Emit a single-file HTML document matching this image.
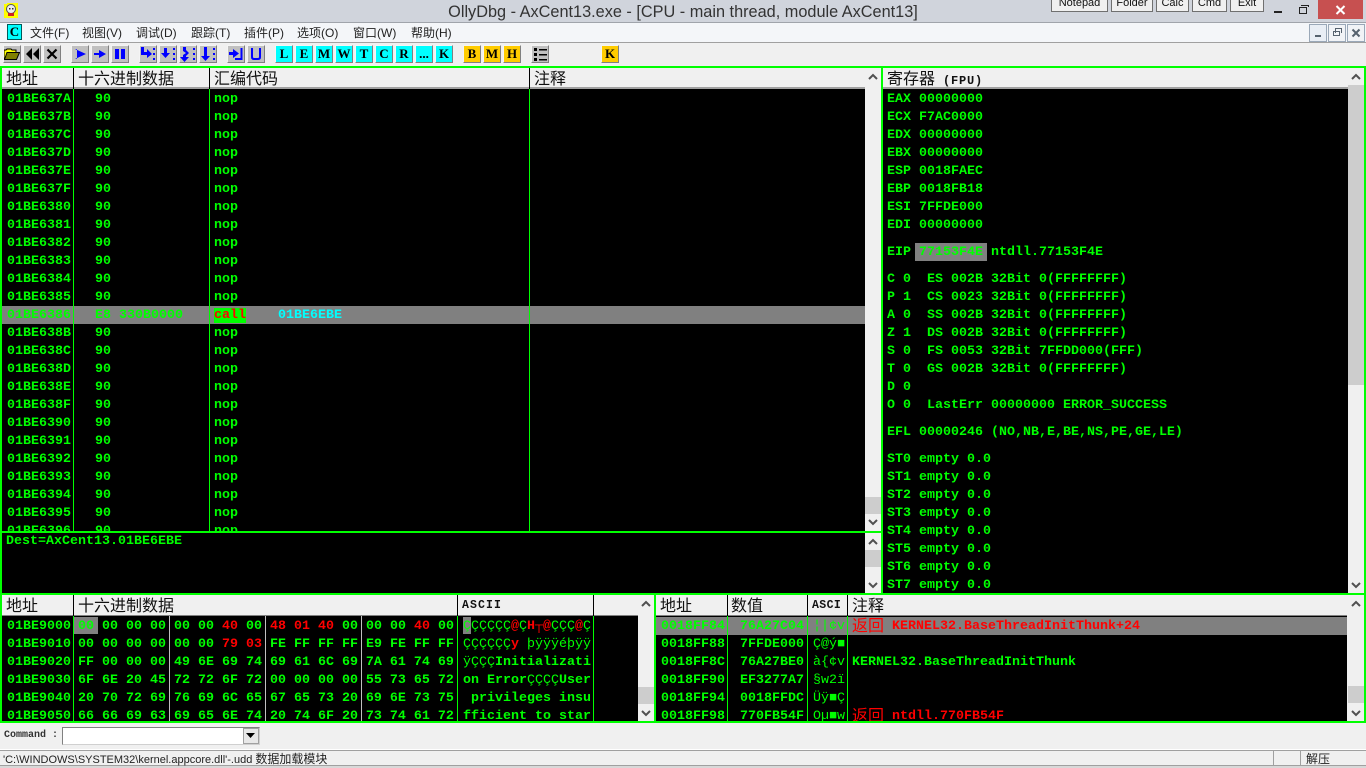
<!DOCTYPE html>
<html><head><meta charset="utf-8"><title>OllyDbg</title>
<style>
*{box-sizing:border-box}
html,body{margin:0;padding:0;width:1366px;height:768px;overflow:hidden;background:#f0f0f0}
div,pre,span.a{position:absolute}
pre{margin:0;font:bold 13.33px/18px "Liberation Mono",monospace;color:#0f0;white-space:pre}
.g{background:#0f0}
.k{background:#000}
.h{background:#f0f0f0;height:21px;overflow:hidden}
.ht{font:16px/23px "Liberation Sans","WenQuanYi Zen Hei",sans-serif;color:#111;white-space:pre}
.hb{font:bold 11.5px/21px "Liberation Mono",monospace;color:#111;white-space:pre;letter-spacing:1.1px}
.m{top:24px;font:12px/18px "Liberation Sans","Noto Sans CJK SC",sans-serif;color:#222;white-space:pre}
.b{top:45px;width:18px;height:18px;background:#c0c0c0;border:1px solid;border-color:#f4f4f4 #808080 #808080 #f4f4f4;overflow:hidden}
.b svg{position:absolute;left:0;top:0}
.c{background:#0ff;font:bold 13px/16px "Liberation Serif",serif;color:#000;text-align:center}
.y{background:#fc0;font:bold 13px/16px "Liberation Serif",serif;color:#000;text-align:center}
.tb{top:-6px;height:18px;background:#f0f0f0;border:1px solid #707070;font:11px/16px "Liberation Sans",sans-serif;color:#111;text-align:center}
.sb{background:#f0f0f0}
.th{background:#cdcdcd}
.w{background:#fff}
.mb{top:24px;width:18px;height:18px;background:#e9eef5;border:1px solid #9aa8b8}
svg{display:block}
.r{color:#f00}
.t{font-weight:normal}
.cj{font:16px/18px "Liberation Sans","WenQuanYi Zen Hei",sans-serif;color:#f00}
</style></head><body>

<!-- title bar -->
<div style="left:0;top:0;width:1366px;height:23px;background:#d0d4dc;border-bottom:1px solid #a0a4ab"></div>
<div style="left:7px;top:3px;width:11px;height:15px;background:#ff0"></div>
<svg style="position:absolute;left:3px;top:3px" width="16" height="16"><rect x="1" y="1" width="14" height="14" fill="#ff0"/><circle cx="8" cy="6" r="4.5" fill="#eee" stroke="#555"/><rect x="5" y="10" width="6" height="3" fill="#c22"/><rect x="6" y="5" width="1.5" height="1.5" fill="#333"/><rect x="9" y="5" width="1.5" height="1.5" fill="#333"/></svg>
<div style="left:433px;top:2px;width:500px;font:16.3px/20px 'Liberation Sans',sans-serif;color:#333;white-space:pre;text-align:center">OllyDbg - AxCent13.exe - [CPU - main thread, module AxCent13]</div>
<div class="tb" style="left:1051px;width:57px">Notepad</div>
<div class="tb" style="left:1111px;width:42px">Folder</div>
<div class="tb" style="left:1156px;width:33px">Calc</div>
<div class="tb" style="left:1192px;width:35px">Cmd</div>
<div class="tb" style="left:1230px;width:34px">Exit</div>
<div style="left:1274px;top:11px;width:8px;height:2px;background:#222"></div>
<div style="left:1299px;top:7px;width:8px;height:7px;border:1px solid #222"></div>
<div style="left:1301px;top:5px;width:8px;height:2px;border-top:1px solid #222;border-right:1px solid #222"></div>
<div style="left:1318px;top:0;width:45px;height:19px;background:#c75050"></div>
<svg style="position:absolute;left:1335px;top:5px" width="11" height="10"><path d="M1.5 1L9.5 9M9.5 1L1.5 9" stroke="#fff" stroke-width="2"/></svg>

<!-- menu -->
<div style="left:0;top:23px;width:1366px;height:20px;background:#f4f6f9;border-bottom:1px solid #a0a0a0"></div>
<div class="c" style="left:7px;top:24px;width:15px;height:16px;border:1px solid #005a5a;font-size:13px;line-height:14px">C</div>
<div class="m" style="left:30px">文件(F)</div>
<div class="m" style="left:82px">视图(V)</div>
<div class="m" style="left:136px">调试(D)</div>
<div class="m" style="left:191px">跟踪(T)</div>
<div class="m" style="left:244px">插件(P)</div>
<div class="m" style="left:297px">选项(O)</div>
<div class="m" style="left:353px">窗口(W)</div>
<div class="m" style="left:411px">帮助(H)</div>
<div class="mb" style="left:1309px"><div style="left:5px;top:10px;width:6px;height:2px;background:#56626e"></div></div>
<div class="mb" style="left:1328px;background:#f1f3f6"><div style="left:4px;top:6px;width:7px;height:5px;border:1px solid #56626e"></div><div style="left:6px;top:3px;width:7px;height:5px;border:1px solid #56626e;border-bottom:0;border-left-width:1px"></div></div>
<div class="mb" style="left:1347px;background:#f1f3f6"><svg style="position:absolute;left:3px;top:3px" width="10" height="10"><path d="M1.5 1.5L8.5 8.5M8.5 1.5L1.5 8.5" stroke="#56626e" stroke-width="2"/></svg></div>

<!-- toolbar -->
<div class="b" style="left:3px"><svg width="16" height="16"><path d="M0 13V4H2L3 3H7L8 4H12V6" fill="#ff0" stroke="#000"/><path d="M0.5 13.5L3 6.5H15.5L12.5 13.5Z" fill="#808000" stroke="#000"/></svg></div>
<div class="b" style="left:23px"><svg width="16" height="16"><path d="M8 2V14L2 8ZM15 2V14L9 8Z" fill="#000"/></svg></div>
<div class="b" style="left:43px"><svg width="16" height="16"><path d="M3.5 3.5L12.5 12.5M12.5 3.5L3.5 12.5" stroke="#000" stroke-width="2.2"/></svg></div>
<div class="b" style="left:71px"><svg width="16" height="16"><path d="M3 3V13L14 8Z M3 3H5V13H3Z" fill="#00f"/></svg></div>
<div class="b" style="left:91px"><svg width="16" height="16"><path d="M2 7H7V4L14 8L7 12V9H2Z" fill="#00f"/></svg></div>
<div class="b" style="left:111px"><svg width="16" height="16"><path d="M3 3H7V13H3ZM9 3H13V13H9Z" fill="#00f"/></svg></div>
<div class="b" style="left:139px"><svg width="16" height="16"><path d="M1 1H4V6H7V3L12 8L7 12V9H1Z" fill="#00f"/><path d="M13 2H15V4H13ZM13 7H15V9H13ZM13 12H15V14H13Z" fill="#00f"/></svg></div>
<div class="b" style="left:159px"><svg width="16" height="16"><path d="M4 2H7V7H10L5.5 12L1 7H4Z" fill="#00f"/><path d="M13 2H15V4H13ZM13 7H15V9H13ZM13 12H15V14H13Z" fill="#00f"/></svg></div>
<div class="b" style="left:179px"><svg width="16" height="16"><path d="M2 1H6V4L9 7L6 10V11H9L4.5 16L0 11H3V9L6 7L3 5V1Z" fill="#00f"/><path d="M13 2H15V4H13ZM13 7H15V9H13ZM13 12H15V14H13Z" fill="#00f"/></svg></div>
<div class="b" style="left:199px"><svg width="16" height="16"><path d="M4 1H7V10H10L5.5 15L1 10H4Z" fill="#00f"/><path d="M13 2H15V4H13ZM13 7H15V9H13ZM13 12H15V14H13Z" fill="#00f"/></svg></div>
<div class="b" style="left:227px"><svg width="16" height="16"><path d="M1 6H5V3L11 7.500L5 12V9H1Z" fill="#00f"/><path d="M13.500 2V13H7" fill="none" stroke="#00f" stroke-width="2"/></svg></div>
<div class="b" style="left:247px"><svg width="16" height="16"><path d="M4 2V11Q4 13 6 13H10Q12 13 12 11V2" fill="none" stroke="#00f" stroke-width="2"/></svg></div>
<div class="b c" style="left:275px">L</div>
<div class="b c" style="left:295px">E</div>
<div class="b c" style="left:315px">M</div>
<div class="b c" style="left:335px">W</div>
<div class="b c" style="left:355px">T</div>
<div class="b c" style="left:375px">C</div>
<div class="b c" style="left:395px">R</div>
<div class="b c" style="left:415px">...</div>
<div class="b c" style="left:435px">K</div>
<div class="b y" style="left:463px">B</div>
<div class="b y" style="left:483px">M</div>
<div class="b y" style="left:503px">H</div>
<div class="b" style="left:531px"><svg width="16" height="16"><path d="M2 2H5V5H2ZM2 7H5V10H2ZM2 12H5V15H2Z" fill="#000"/><path d="M7 3H15V4.500H7ZM7 8H15V9.500H7ZM7 13H15V14.500H7Z" fill="#000"/></svg></div>
<div class="b y" style="left:601px">K</div>

<!-- green frame base -->
<div class="g" style="left:0;top:66px;width:1366px;height:657px"></div>

<!-- CPU pane -->
<div class="h" style="left:2px;top:68px;width:863px;border-bottom:2px solid #a0a0a0"></div>
<div class="ht" style="left:6px;top:68px">地址</div>
<div class="ht" style="left:78px;top:68px">十六进制数据</div>
<div class="ht" style="left:214px;top:68px">汇编代码</div>
<div class="ht" style="left:534px;top:68px">注释</div>
<div class="k" style="left:73px;top:68px;width:1px;height:21px"></div>
<div class="k" style="left:209px;top:68px;width:1px;height:21px"></div>
<div class="k" style="left:529px;top:68px;width:1px;height:21px"></div>
<div class="k" style="left:2px;top:89px;width:863px;height:442px;overflow:hidden">
<div style="left:0;top:217px;width:863px;height:18px;background:#808080"></div>
<div class="g" style="left:71px;top:0;width:1px;height:442px"></div>
<div class="g" style="left:207px;top:0;width:1px;height:442px"></div>
<div class="g" style="left:527px;top:0;width:1px;height:442px"></div>
<pre style="left:5px;top:2px">01BE637A
01BE637B
01BE637C
01BE637D
01BE637E
01BE637F
01BE6380
01BE6381
01BE6382
01BE6383
01BE6384
01BE6385
01BE6386
01BE638B
01BE638C
01BE638D
01BE638E
01BE638F
01BE6390
01BE6391
01BE6392
01BE6393
01BE6394
01BE6395
01BE6396</pre>
<pre style="left:93px;top:2px">90
90
90
90
90
90
90
90
90
90
90
90
E8 330B0000
90
90
90
90
90
90
90
90
90
90
90
90</pre>
<pre style="left:212px;top:2px">nop
nop
nop
nop
nop
nop
nop
nop
nop
nop
nop
nop
<span style="background:#0f0;color:#f00">call</span>    <span style="color:#0ff">01BE6EBE</span>
nop
nop
nop
nop
nop
nop
nop
nop
nop
nop
nop
nop</pre>
</div>
<div class="sb" style="left:865px;top:68px;width:16px;height:463px"></div>
<svg style="position:absolute;left:865px;top:73px" width="16" height="8"><path d="M4 6L8 2L12 6" fill="none" stroke="#505050" stroke-width="2"/></svg>
<div class="th" style="left:865px;top:497px;width:16px;height:17px"></div>
<svg style="position:absolute;left:865px;top:518px" width="16" height="8"><path d="M4 2L8 6L12 2" fill="none" stroke="#505050" stroke-width="2"/></svg>

<!-- info pane -->
<div class="k" style="left:2px;top:533px;width:863px;height:60px"></div>
<pre style="left:6px;top:533px">Dest=AxCent13.01BE6EBE</pre>
<div class="sb" style="left:865px;top:533px;width:16px;height:60px"></div>
<svg style="position:absolute;left:865px;top:538px" width="16" height="8"><path d="M4 6L8 2L12 6" fill="none" stroke="#505050" stroke-width="2"/></svg>
<div class="th" style="left:865px;top:550px;width:16px;height:17px"></div>
<svg style="position:absolute;left:865px;top:581px" width="16" height="8"><path d="M4 2L8 6L12 2" fill="none" stroke="#505050" stroke-width="2"/></svg>

<!-- registers -->
<div class="h" style="left:883px;top:68px;width:465px;border-bottom:2px solid #a0a0a0"></div>
<div class="ht" style="left:887px;top:68px">寄存器<span style="font:bold 12px/21px 'Liberation Mono',monospace;letter-spacing:.8px;margin-left:8px">(FPU)</span></div>
<div class="k" style="left:883px;top:89px;width:465px;height:504px"></div>
<pre style="left:887px;top:91px">EAX 00000000
ECX F7AC0000
EDX 00000000
EBX 00000000
ESP 0018FAEC
EBP 0018FB18
ESI 7FFDE000
EDI 00000000</pre>
<div style="left:915px;top:243px;width:72px;height:18px;background:#808080"></div>
<pre style="left:887px;top:244px">EIP 77153F4E ntdll.77153F4E</pre>
<pre style="left:887px;top:271px">C 0  ES 002B 32Bit 0(FFFFFFFF)
P 1  CS 0023 32Bit 0(FFFFFFFF)
A 0  SS 002B 32Bit 0(FFFFFFFF)
Z 1  DS 002B 32Bit 0(FFFFFFFF)
S 0  FS 0053 32Bit 7FFDD000(FFF)
T 0  GS 002B 32Bit 0(FFFFFFFF)
D 0
O 0  LastErr 00000000 ERROR_SUCCESS</pre>
<pre style="left:887px;top:424px">EFL 00000246 (NO,NB,E,BE,NS,PE,GE,LE)</pre>
<pre style="left:887px;top:451px">ST0 empty 0.0
ST1 empty 0.0
ST2 empty 0.0
ST3 empty 0.0
ST4 empty 0.0
ST5 empty 0.0
ST6 empty 0.0
ST7 empty 0.0</pre>
<div class="sb" style="left:1348px;top:68px;width:16px;height:525px"></div>
<svg style="position:absolute;left:1348px;top:73px" width="16" height="8"><path d="M4 6L8 2L12 6" fill="none" stroke="#505050" stroke-width="2"/></svg>
<div class="th" style="left:1348px;top:85px;width:16px;height:300px"></div>
<svg style="position:absolute;left:1348px;top:581px" width="16" height="8"><path d="M4 2L8 6L12 2" fill="none" stroke="#505050" stroke-width="2"/></svg>

<!-- dump pane -->
<div class="h" style="left:2px;top:595px;width:636px;border-bottom:1px solid #808080"></div>
<div class="ht" style="left:6px;top:595px">地址</div>
<div class="ht" style="left:78px;top:595px">十六进制数据</div>
<div class="hb" style="left:462px;top:595px">ASCII</div>
<div class="k" style="left:73px;top:595px;width:1px;height:21px"></div>
<div class="k" style="left:457px;top:595px;width:1px;height:21px"></div>
<div class="k" style="left:593px;top:595px;width:1px;height:21px"></div>
<div class="k" style="left:2px;top:616px;width:636px;height:105px;overflow:hidden">
<div style="left:72px;top:1px;width:24px;height:17px;background:#808080"></div>
<div style="left:461px;top:1px;width:8px;height:17px;background:#808080"></div>
<div class="g" style="left:71px;top:0;width:1px;height:105px"></div>
<div style="left:167px;top:0;width:1px;height:105px;background:#c0c0c0"></div>
<div style="left:263px;top:0;width:1px;height:105px;background:#c0c0c0"></div>
<div style="left:359px;top:0;width:1px;height:105px;background:#c0c0c0"></div>
<div class="g" style="left:455px;top:0;width:1px;height:105px"></div>
<div class="g" style="left:591px;top:0;width:1px;height:105px"></div>
<pre style="left:5px;top:2px">01BE9000
01BE9010
01BE9020
01BE9030
01BE9040
01BE9050</pre>
<pre style="left:76px;top:2px">00 00 00 00 00 00 <span class="r">40</span> 00 <span class="r">48 01 40</span> 00 00 00 <span class="r">40</span> 00
00 00 00 00 00 00 <span class="r">79 03</span> FE FF FF FF E9 FE FF FF
FF 00 00 00 49 6E 69 74 69 61 6C 69 7A 61 74 69
6F 6E 20 45 72 72 6F 72 00 00 00 00 55 73 65 72
20 70 72 69 76 69 6C 65 67 65 73 20 69 6E 73 75
66 66 69 63 69 65 6E 74 20 74 6F 20 73 74 61 72</pre>
<pre style="left:461px;top:2px"><span class="t">ÇÇÇÇÇÇ</span><span class="r">@</span><span class="t">Ç</span><span class="r">H┬@</span><span class="t">ÇÇÇ</span><span class="r">@</span><span class="t">Ç</span>
<span class="t">ÇÇÇÇÇÇ</span><span class="r">y</span> <span class="t">þÿÿÿéþÿÿ</span>
<span class="t">ÿÇÇÇ</span>Initializati
on Error<span class="t">ÇÇÇÇ</span>User
 privileges insu
fficient to star</pre>
</div>
<div class="sb" style="left:638px;top:595px;width:16px;height:126px"></div>
<svg style="position:absolute;left:638px;top:600px" width="16" height="8"><path d="M4 6L8 2L12 6" fill="none" stroke="#505050" stroke-width="2"/></svg>
<div class="th" style="left:638px;top:687px;width:16px;height:17px"></div>
<svg style="position:absolute;left:638px;top:709px" width="16" height="8"><path d="M4 2L8 6L12 2" fill="none" stroke="#505050" stroke-width="2"/></svg>

<!-- stack pane -->
<div class="h" style="left:656px;top:595px;width:691px;border-bottom:1px solid #808080"></div>
<div class="ht" style="left:660px;top:595px">地址</div>
<div class="ht" style="left:731px;top:595px">数值</div>
<div class="hb" style="left:812px;top:595px;letter-spacing:.4px">ASCI</div>
<div class="ht" style="left:852px;top:595px">注释</div>
<div class="k" style="left:727px;top:595px;width:1px;height:21px"></div>
<div class="k" style="left:807px;top:595px;width:1px;height:21px"></div>
<div class="k" style="left:847px;top:595px;width:1px;height:21px"></div>
<div class="k" style="left:656px;top:616px;width:691px;height:105px;overflow:hidden">
<div style="left:0;top:1px;width:691px;height:18px;background:#808080"></div>
<div class="g" style="left:71px;top:0;width:1px;height:105px"></div>
<div class="g" style="left:151px;top:0;width:1px;height:105px"></div>
<div class="g" style="left:191px;top:0;width:1px;height:105px"></div>
<pre style="left:5px;top:2px">0018FF84
0018FF88
0018FF8C
0018FF90
0018FF94
0018FF98</pre>
<pre style="left:84px;top:2px">76A27C04
7FFDE000
76A27BE0
EF3277A7
0018FFDC
770FB54F</pre>
<pre class="t" style="left:157px;top:2px;font-weight:normal">¦|¢v
Ç@ý■
à{¢v
§w2ï
Üÿ■Ç
Oµ■w</pre>
<div class="cj" style="left:196px;top:2px">返回</div>
<pre class="r" style="left:236px;top:2px">KERNEL32.BaseThreadInitThunk+24</pre>
<pre style="left:196px;top:38px">KERNEL32.BaseThreadInitThunk</pre>
<div class="cj" style="left:196px;top:92px">返回</div>
<pre class="r" style="left:236px;top:92px">ntdll.770FB54F</pre>
</div>
<div class="sb" style="left:1347px;top:595px;width:17px;height:126px"></div>
<svg style="position:absolute;left:1348px;top:600px" width="16" height="8"><path d="M4 6L8 2L12 6" fill="none" stroke="#505050" stroke-width="2"/></svg>
<div class="th" style="left:1348px;top:686px;width:16px;height:17px"></div>
<svg style="position:absolute;left:1348px;top:709px" width="16" height="8"><path d="M4 2L8 6L12 2" fill="none" stroke="#505050" stroke-width="2"/></svg>

<!-- command -->
<div style="left:0;top:723px;width:1366px;height:27px;background:#f0f0f0"></div>
<pre style="left:4px;top:727px;font:bold 10px/18px 'Liberation Mono',monospace;color:#333">Command :</pre>
<div class="w" style="left:62px;top:727px;width:198px;height:18px;border:1px solid;border-color:#808080 #d0d0d0 #d0d0d0 #808080"></div>
<div style="left:243px;top:728px;width:16px;height:16px;background:#e8e8e8;border:1px solid #a0a0a0"></div>
<svg style="position:absolute;left:246px;top:733px" width="10" height="6"><path d="M0 0H9L4.500 5Z" fill="#000"/></svg>

<!-- status -->
<div style="left:0;top:749px;width:1366px;height:1px;background:#fff"></div>
<div style="left:0;top:750px;width:1366px;height:16px;background:#f0f0f0;border-top:1px solid #a0a0a0;border-bottom:1px solid #a0a0a0"></div>
<div style="left:3px;top:751px;font:11px/16px 'Liberation Sans','Noto Sans CJK SC',sans-serif;color:#222;white-space:pre">'C:\WINDOWS\SYSTEM32\kernel.appcore.dll'-.udd <span style="font-size:12px">数据加载模块</span></div>
<div style="left:1273px;top:750px;width:1px;height:16px;background:#a0a0a0"></div>
<div style="left:1300px;top:750px;width:1px;height:16px;background:#a0a0a0"></div>
<div style="left:1306px;top:751px;font:12px/16px 'Liberation Sans','Noto Sans CJK SC',sans-serif;color:#222">解压</div>
<div style="left:0;top:766px;width:1366px;height:2px;background:#d8d8d8"></div>
</body></html>
